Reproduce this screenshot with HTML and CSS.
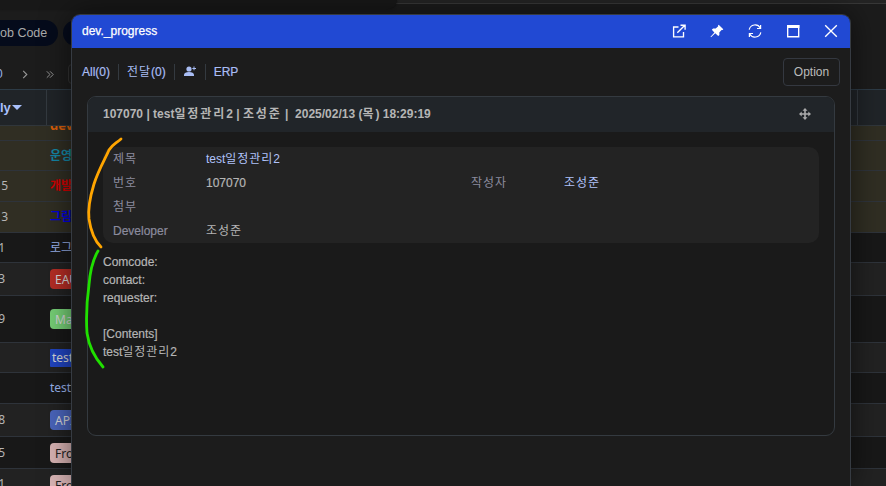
FILE: index.html
```html
<!DOCTYPE html>
<html lang="ko">
<head>
<meta charset="utf-8">
<title>dev._progress</title>
<link rel="stylesheet" href="styles.css">
</head>
<body>
<div class="page">
  <div class="topbar"><div class="topbar-tab"></div></div>
  <div class="chips"><span class="chip chip-first">ob Code</span><span class="chip chip-next"></span></div>
  <div class="pager">
    <span class="pager-total">0</span>
    <svg class="chev" viewBox="0 0 6 10"><path d="M1 1l4 4-4 4"/></svg>
    <svg class="chev2" viewBox="0 0 10 10"><path d="M1 1l4 4-4 4M5 1l4 4-4 4"/></svg>
    <span class="pager-box"></span>
  </div>
  <div class="table">
    <div class="row head"><span class="cell num">ly<i class="caret"></i></span><span class="cell name"></span><span class="cell last"></span></div>
    <div class="row gold r15"><span class="num"></span><b class="name orange">dev.</b></div>
    <div class="row gold r30"><span class="num"></span><b class="name cyan">운영</b></div>
    <div class="row gold r31"><span class="num single">5</span><b class="name red">개발</b></div>
    <div class="row gold r31"><span class="num single">3</span><b class="name blue">그림</b></div>
    <div class="row dark r30"><span class="num">1</span><span class="name link">로그</span></div>
    <div class="row lite r33"><span class="num">3</span><span class="tag tag-red">EAU</span></div>
    <div class="row dark r47"><span class="num">9</span><span class="tag tag-green">Ma</span></div>
    <div class="row lite r30"><span class="num"></span><span class="tag tag-blue">test</span></div>
    <div class="row dark r31"><span class="num"></span><span class="name link">test</span></div>
    <div class="row lite r33"><span class="num">8</span><span class="tag tag-indigo">API</span></div>
    <div class="row dark r32"><span class="num">5</span><span class="tag tag-pink">Fro</span></div>
    <div class="row lite r18"><span class="num">1</span><span class="tag tag-pink">Fro</span></div>
  </div>
</div>

<section class="window">
  <header class="titlebar">
    <span class="title">dev._progress</span>
    <span class="controls">
      <svg viewBox="0 0 14 14"><path class="line" d="M6.5 3H1.6v9.9h9.9V8M8.5 1.2h4.6v4.6M5.3 8.7l7.3-7.3"/></svg>
      <svg viewBox="0 0 14 14"><path class="fill" d="M8.7.8l4.6 4.5-.7.8-1-.1-2.3 2.4.1 2.5-1.2 1.2-2.9-2.8L1 13.2l-.5-.5 3.9-4.3L1.8 5.7l1.3-1.2 2.6.1 2.5-2.3-.2-.9z"/></svg>
      <svg viewBox="0 0 14 14"><path class="line thin" d="M1.2 5.7A6 6 0 0 1 12.3 4M12.6.9v3.6H9M12.8 8.3A6 6 0 0 1 1.7 10M1.4 13.1V9.5H5"/></svg>
      <svg viewBox="0 0 14 14"><path class="line" d="M1.7 1.7h11v11h-11z"/><path class="fill" d="M1 1h12.4v3H1z"/></svg>
      <svg viewBox="0 0 14 14"><path class="line" d="M1.2 1.2l11.6 11.6M12.8 1.2L1.2 12.8"/></svg>
    </span>
  </header>
  <nav class="toolbar">
    <span class="tool">All(0)</span>
    <span class="tool"><span class="ko">전달</span>(0)</span>
    <span class="tool tool-icon"><svg viewBox="0 0 12 12"><circle cx="5" cy="4" r="2.6"/><path d="M0 11V9.8Q.4 7 5 7t5 2.8V11zM8.3 2.9h1.2V1.5h1v1.4H12v1h-1.5v1.4h-1V3.9H8.3z"/></svg></span>
    <span class="tool">ERP</span>
    <button class="option">Option</button>
  </nav>
  <article class="card">
    <header class="card-head">
      <span class="card-title">107070 | test<span class="ko">일정관리</span>2 | <span class="ko">조성준</span> |&nbsp; 2025/02/13 (<span class="ko">목</span>) 18:29:19</span>
      <svg class="move" viewBox="0 0 12 12"><path d="M6 0l2.5 2.7H6.8v2.5h2.5V3.5L12 6 9.3 8.5V6.8H6.8v2.5h1.7L6 12 3.5 9.3h1.7V6.8H2.7v1.7L0 6l2.7-2.5v1.7h2.5V2.7H3.5z"/></svg>
    </header>
    <div class="card-body">
      <div class="fields">
        <span class="label ko">제목</span><span class="value accent">test<span class="ko">일정관리</span>2</span><span></span><span></span>
        <span class="label ko">번호</span><span class="value strong">107070</span><span class="label ko">작성자</span><span class="value accent ko">조성준</span>
        <span class="label ko">첨부</span><span></span><span></span><span></span>
        <span class="label latin">Developer</span><span class="value ko">조성준</span><span></span><span></span>
      </div>
      <div class="content">
        <div>Comcode:</div>
        <div>contact:</div>
        <div>requester:</div>
        <div>&nbsp;</div>
        <div>[Contents]</div>
        <div>test<span class="ko">일정관리</span>2</div>
      </div>
    </div>
  </article>
</section>
<svg class="marks" viewBox="0 0 886 486">
  <path class="mark-orange" d="M121 139C115 144 112 145 109 150C106 157 98 171 94 184C90 197 88 210 89 219C91 233 95 241 101 247"/>
  <path class="mark-green" d="M98 251C92 261 90 272 89 285C87 299 86 318 87 333C89 347 96 359 103 367"/>
</svg>
</body>
</html>
```

FILE: styles.css
```css
* { box-sizing: border-box; }
body { margin: 0; width: 886px; height: 486px; overflow: hidden; position: relative; background: #1c1c1c; color: #b5b5b5; font: 12px/18px "Liberation Sans", "Noto Sans CJK KR", sans-serif; }
svg { display: block; flex: none; }
.ko { letter-spacing: .96px; -webkit-text-stroke: 0; }

.page { height: 486px; overflow: hidden; display: flex; flex-direction: column; }
.topbar { height: 4px; flex: none; background: #242424; border-bottom: 1px solid #383838; }
.topbar-tab { width: 397px; height: 9px; background: #181818; border-radius: 0 0 9px 0; box-shadow: 0 0 3px #111; position: relative; }
.chips { display: flex; gap: 5px; padding-top: 16px; height: 42px; flex: none; }
.chip { height: 26px; border-radius: 13px; background: #050b1b; font-size: 12.5px; line-height: 26px; color: #aaa; white-space: nowrap; }
.chip-first { width: 58px; border-radius: 0 13px 13px 0; }
.chip-next { width: 80px; }
.pager { display: flex; align-items: center; height: 43px; flex: none; padding-top: 13px; }
.pager-total { width: 22px; margin-left: -4px; color: #9bb3e8; }
.pager svg { fill: none; stroke: #999; stroke-width: 1.2; }
.chev { width: 6px; height: 9px; margin: 0 18px 0 4px; }
.chev2 { width: 8px; height: 9px; }
.pager-box { width: 80px; height: 20px; margin-left: 14px; border: 1px solid #333; border-radius: 4px; }

.table { font-family: "Noto Sans", "Noto Sans CJK KR", sans-serif; flex: none; }
.row { display: flex; align-items: center; border-bottom: 1px solid #2e333a; white-space: nowrap; overflow: hidden; }
.row .num { width: 56px; margin-left: -9px; flex: none; text-align: right; padding-right: 42px; margin-right: 3px; }
.row .single { padding-right: 39px; }
.head { height: 37px; background: #202428; border-top: 1px solid #2d3b46; border-bottom-color: #30363b; align-items: stretch; }
.row.head .num { width: 47px; margin: 0; padding: 0; text-align: left; border-right: 1px solid #343a40; color: #a9c0fb; font: bold 13px/36px "Liberation Sans", sans-serif; }
.caret { display: inline-block; border: 5px solid transparent; border-top: 5px solid #a9c0fb; border-bottom: 0; margin: 0 0 2px 1px; }
.head .name { width: 811px; border-right: 1px solid #343a40; }
.r15 { height: 15px; }
.r18 { height: 18px; align-items: flex-start; padding-top: 6px; border: 0; }
.r30 { height: 30px; }
.r31 { height: 31px; }
.r32 { height: 32px; }
.r33 { height: 33px; }
.r47 { height: 47px; }
.gold { background: #302e23; }
.dark { background: #181818; }
.lite { background: #222; }
.orange { color: #d75d0b; margin-top: -17px; font-size: 13px; }
.cyan { color: #1486a5; }
.red { color: #d00000; }
.blue { color: #0000df; }
.link { color: #9bb4ef; }
.tag { height: 20px; padding: 1px 5px 0; border-radius: 4px; line-height: 20px; font-size: 12px; color: #d8d8d8; width: 60px; }
.tag-red { background: #b52d25; }
.tag-green { background: #76cf76; }
.tag-blue { background: #2044c0; border-radius: 1px; padding: 0 2px; height: 18px; line-height: 18px; }
.tag-indigo { background: #4a65bc; }
.tag-pink { background: #d9b4b4; color: #222; }

.window { position: absolute; left: 71px; top: 14px; width: 780px; height: 472px; border: 1px solid #363b42; border-bottom: 0; border-radius: 9px 9px 0 0; background: #1c1c1c; box-shadow: 0 0 30px rgba(0,0,0,.55); overflow: hidden; }
.titlebar { height: 33px; background: #2149d3; display: flex; align-items: center; justify-content: space-between; padding: 0 12px 0 10px; }
.title { color: #fff; -webkit-text-stroke: .25px #fff; margin-top: -2px; }
.controls { display: flex; gap: 24px; margin-top: -1px; }
.controls svg { width: 14px; height: 14px; }
.line { fill: none; stroke: #fff; stroke-width: 1.35; }
.thin { stroke-width: 1.2; }
.fill { fill: #fff; }
.toolbar { height: 48px; display: flex; align-items: center; padding: 0 10px; color: #a9bdf4; }
.tool { height: 16px; line-height: 16px; padding-right: 8px; margin-right: 8px; border-right: 1px solid #343a40; -webkit-text-stroke: .2px #a9bdf4; white-space: nowrap; }
.tool .ko { -webkit-text-stroke: 0; letter-spacing: .96px; }
.tool:nth-child(4) { border: 0; }
.tool-icon { padding-right: 9px; padding-left: 1px; }
.tool-icon svg { width: 12px; height: 12px; fill: #a9bdf4; margin-top: 1px; }
.option { margin-left: auto; width: 57px; height: 28px; padding: 0; background: #1c1c1c; border: 1px solid #343840; border-radius: 4px; color: #bbb; font: inherit; }

.card { width: 748px; height: 340px; margin-left: 15px; border: 1px solid #343a40; border-radius: 9px; overflow: hidden; background: #1a1a1a; }
.card-head { height: 35px; background: #212529; display: flex; align-items: center; justify-content: space-between; padding: 0 23px 0 15px; }
.card-title { font-weight: bold; white-space: nowrap; margin-top: -2px; }
.card-title .ko { letter-spacing: 1.9px; }
.move { width: 12px; height: 12px; fill: #aaa; margin-top: -1px; }
.card-body { padding: 15px; }
.fields { display: grid; grid-template-columns: 93px 265px 93px 1fr; grid-auto-rows: 24px; line-height: 24px; height: 96px; padding-left: 10px; border-radius: 10px; background: #232323; }
.label { color: #8b8b9e; }
.latin { -webkit-text-stroke: .2px #8b8b9e; }
.accent { color: #b0c2fa; }
.strong { -webkit-text-stroke: .2px #b5b5b5; }
.content { margin-top: 10px; -webkit-text-stroke: .2px #b5b5b5; }

.marks { position: absolute; inset: 0; width: 886px; height: 486px; pointer-events: none; fill: none; stroke-width: 2.8; stroke-linecap: round; }
.mark-orange { stroke: #ffa500; }
.mark-green { stroke: #20e000; }
```
